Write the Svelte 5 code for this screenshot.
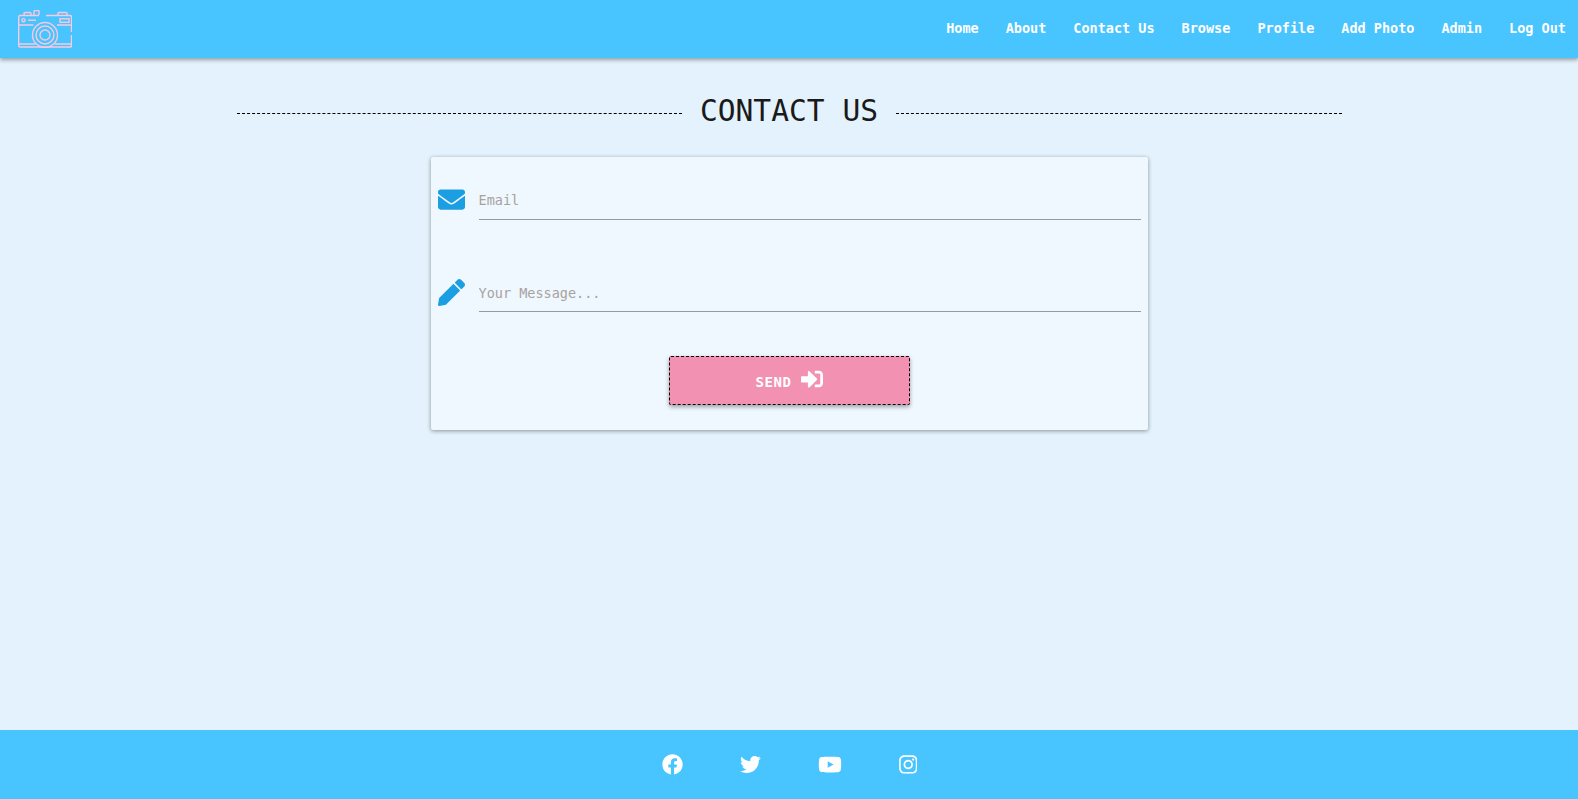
<script>
  const links = ['Home', 'About', 'Contact Us', 'Browse', 'Profile', 'Add Photo', 'Admin', 'Log Out'];
</script>

<div class="page">
  <nav>
    <a class="logo" href="#top" aria-label="Home">
      <svg viewBox="0 0 54 38" width="54" height="38" fill="none" stroke="#fbc8de" stroke-width="1.4">
        <path d="M21 5.500H2.200A1.500 1.500 0 0 0 .7 7v28.500A1.500 1.500 0 0 0 2.200 37h49.800a1.500 1.500 0 0 0 1.500-1.500V25M53.500 22V7A1.500 1.500 0 0 0 52 5.500H28" />
        <path d="M1 15h14.500M39 15h14.500M1 34h16.500M36.500 34H53.500" />
        <path d="M6 5V3.500a1 1 0 0 1 1-1h5a1 1 0 0 1 1 1V5M16 5V1.500a1 1 0 0 1 1-1h3a1 1 0 0 1 1 1V5M40 5V3.500a1 1 0 0 1 1-1h7a1 1 0 0 1 1 1V5" />
        <circle cx="27" cy="25" r="12.500" />
        <circle cx="27" cy="25" r="9" />
        <circle cx="27" cy="25" r="5" />
        <circle cx="5.500" cy="10.200" r="1.600" />
        <path d="M10 10.200h8" />
        <rect x="42" y="8.800" width="9" height="3.500" />
      </svg>
    </a>
    <ul>
      {#each links as link}
        <li><a href="#top">{link}</a></li>
      {/each}
    </ul>
  </nav>

  <main>
    <div class="heading">
      <span class="rule"></span>
      <h1>CONTACT US</h1>
      <span class="rule"></span>
    </div>

    <form class="card">
      <div class="row">
        <svg class="icon envelope" viewBox="0 0 512 512" width="27" height="27"><path d="M502.3 190.8c3.9-3.1 9.7-.2 9.7 4.7V400c0 26.500-21.500 48-48 48H48c-26.500 0-48-21.500-48-48V195.600c0-5 5.700-7.800 9.700-4.700 22.400 17.400 52.100 39.500 154.100 113.600 21.100 15.400 56.700 47.800 92.200 47.600 35.700.3 72-32.800 92.300-47.600 102-74.100 131.600-96.300 154-113.700zM256 320c23.200.4 56.600-29.200 73.400-41.400 132.700-96.300 142.800-104.700 173.400-128.700 5.800-4.500 9.200-11.500 9.200-18.900v-19c0-26.500-21.500-48-48-48H48C21.500 64 0 85.500 0 112v19c0 7.400 3.400 14.300 9.200 18.900 30.600 23.900 40.700 32.400 173.400 128.700 16.800 12.200 50.200 41.800 73.400 41.400z"/></svg>
        <input type="email" placeholder="Email" />
      </div>
      <div class="row message">
        <svg class="icon" viewBox="0 0 512 512" width="27" height="27"><path d="M497.900 142.100l-46.100 46.100c-4.700 4.700-12.300 4.700-17 0l-111-111c-4.700-4.700-4.700-12.300 0-17l46.100-46.100c18.700-18.700 49.100-18.700 67.900 0l60.100 60.100c18.800 18.700 18.800 49.100 0 67.900zM284.200 99.800L21.600 362.400.4 483.900c-2.900 16.400 11.400 30.600 27.800 27.800l121.500-21.300 262.600-262.600c4.700-4.700 4.700-12.300 0-17l-111-111c-4.800-4.700-12.400-4.700-17.100 0z"/></svg>
        <input type="text" placeholder="Your Message..." />
      </div>
      <button type="button">
        SEND
        <svg viewBox="0 0 512 512" width="22" height="22"><path d="M416 448h-84c-6.600 0-12-5.400-12-12v-40c0-6.600 5.400-12 12-12h84c17.700 0 32-14.300 32-32V160c0-17.700-14.300-32-32-32h-84c-6.600 0-12-5.400-12-12V76c0-6.600 5.400-12 12-12h84c53 0 96 43 96 96v192c0 53-43 96-96 96zm-47-201L201 79c-15-15-41-4.500-41 17v96H24c-13.300 0-24 10.700-24 24v96c0 13.300 10.700 24 24 24h136v96c0 21.500 26 32 41 17l168-168c9.300-9.400 9.300-24.600 0-34z"/></svg>
      </button>
    </form>
  </main>

  <footer>
    <svg viewBox="0 0 512 512" width="21" height="21"><path d="M504 256C504 119 393 8 256 8S8 119 8 256c0 123.780 90.690 226.380 209.250 245V327.690h-63V256h63v-54.640c0-62.150 37-96.480 93.670-96.480 27.140 0 55.520 4.840 55.520 4.840v61h-31.280c-30.800 0-40.410 19.120-40.410 38.730V256h68.780l-11 71.690h-57.780V501C413.310 482.380 504 379.780 504 256z"/></svg>
    <svg viewBox="0 0 512 512" width="21" height="21"><path d="M459.370 151.716c.325 4.548.325 9.097.325 13.645 0 138.720-105.583 298.558-298.558 298.558-59.452 0-114.680-17.219-161.137-47.106 8.447.974 16.568 1.299 25.340 1.299 49.055 0 94.213-16.568 130.274-44.832-46.132-.975-84.792-31.188-98.112-72.772 6.498.974 12.995 1.624 19.818 1.624 9.421 0 18.843-1.300 27.614-3.573-48.081-9.747-84.143-51.980-84.143-102.985v-1.299c13.969 7.797 30.214 12.670 47.431 13.319-28.264-18.843-46.781-51.005-46.781-87.391 0-19.492 5.197-37.360 14.294-52.954 51.655 63.675 129.300 105.258 216.365 109.807-1.624-7.797-2.599-15.918-2.599-24.040 0-57.828 46.782-104.934 104.934-104.934 30.213 0 57.502 12.670 76.670 33.137 23.715-4.548 46.456-13.320 66.599-25.340-7.798 24.366-24.366 44.833-46.132 57.827 21.117-2.273 41.584-8.122 60.426-16.243-14.292 20.791-32.161 39.308-52.628 54.253z"/></svg>
    <svg viewBox="0 0 576 512" width="24" height="21"><path d="M549.655 124.083c-6.281-23.650-24.787-42.276-48.284-48.597C458.781 64 288 64 288 64S117.220 64 74.629 75.486c-23.497 6.322-42.003 24.947-48.284 48.597-11.412 42.867-11.412 132.305-11.412 132.305s0 89.438 11.412 132.305c6.281 23.650 24.787 41.500 48.284 47.821C117.220 448 288 448 288 448s170.780 0 213.371-11.486c23.497-6.321 42.003-24.171 48.284-47.821 11.412-42.867 11.412-132.305 11.412-132.305s0-89.438-11.412-132.305zm-317.510 213.508V175.185l142.739 81.205-142.739 81.201z"/></svg>
    <svg viewBox="0 0 448 512" width="18.500" height="21"><path d="M224.100 141c-63.600 0-114.900 51.300-114.900 114.900s51.300 114.900 114.900 114.900S339 319.500 339 255.900 287.700 141 224.100 141zm0 189.600c-41.100 0-74.700-33.500-74.700-74.700s33.500-74.700 74.700-74.700 74.700 33.500 74.700 74.700-33.600 74.700-74.700 74.700zm146.400-194.300c0 14.900-12 26.800-26.800 26.800-14.900 0-26.800-12-26.800-26.800s12-26.800 26.800-26.800 26.800 12 26.800 26.800zm76.100 27.200c-1.700-35.900-9.900-67.700-36.200-93.900-26.200-26.200-58-34.400-93.900-36.200-37-2.100-147.900-2.100-184.900 0-35.800 1.700-67.600 9.900-93.900 36.100s-34.400 58-36.200 93.900c-2.100 37-2.100 147.900 0 184.900 1.700 35.900 9.900 67.700 36.200 93.900s58 34.400 93.900 36.200c37 2.100 147.900 2.100 184.900 0 35.900-1.700 67.700-9.900 93.900-36.200 26.200-26.200 34.400-58 36.200-93.900 2.100-37 2.100-147.800 0-184.800zM398.800 388c-7.800 19.600-22.900 34.700-42.600 42.600-29.500 11.700-99.500 9-132.100 9s-102.700 2.600-132.100-9c-19.600-7.800-34.700-22.900-42.600-42.600-11.700-29.500-9-99.500-9-132.100s-2.600-102.700 9-132.100c7.800-19.600 22.900-34.700 42.600-42.600 29.500-11.700 99.500-9 132.100-9s102.700-2.600 132.100 9c19.600 7.800 34.700 22.900 42.600 42.600 11.700 29.500 9 99.500 9 132.100s2.700 102.700-9 132.100z"/></svg>
  </footer>
</div>

<style>
  :global(body) {
    background: #e3f2fd;
  }

  .page {
    display: flex;
    flex-direction: column;
    min-height: 799px;
    font-family: "DejaVu Sans Mono", "Liberation Mono", monospace;
  }

  nav {
    display: flex;
    align-items: center;
    justify-content: space-between;
    height: 58px;
    padding: 0 12px 0 18px;
    box-sizing: border-box;
    background: #48c4ff;
    box-shadow: 0 2px 4px rgba(0, 0, 0, 0.35);
  }

  .logo {
    display: flex;
  }

  ul {
    display: flex;
    gap: 27px;
    margin: -4px 0 0;
    padding: 0;
    list-style: none;
  }

  li a {
    color: #fff;
    font-size: 13.500px;
    font-weight: 700;
    text-decoration: none;
  }

  main {
    flex: 1;
    display: flex;
    flex-direction: column;
    align-items: center;
  }

  .heading {
    display: flex;
    align-items: center;
    gap: 18.400px;
    width: 1105px;
    margin-top: 35px;
    height: 34px;
  }

  .rule {
    flex: 1;
    border-top: 1px dashed #000;
    margin-top: 6px;
  }

  h1 {
    margin: 2px 0 0;
    color: #1a1a1a;
    font-size: 29.600px;
    font-weight: 400;
    line-height: 34px;
  }

  .card {
    display: flex;
    flex-direction: column;
    width: 717px;
    height: 273px;
    margin-top: 30px;
    padding: 0 7px;
    box-sizing: border-box;
    background: #eff7ff;
    border-radius: 2px;
    box-shadow: 0 1px 4px rgba(0, 0, 0, 0.4);
  }

  .row {
    display: flex;
    align-items: center;
    gap: 14px;
    margin-top: 23px;
    height: 40px;
  }

  .row.message {
    margin-top: 52px;
  }

  .icon {
    flex: none;
    fill: #1b9fe2;
  }

  .envelope {
    margin-top: -2px;
  }

  input {
    flex: 1;
    height: 40px;
    padding: 0;
    box-sizing: border-box;
    border: 0;
    border-bottom: 1px solid #9a9a9a;
    outline: none;
    background: transparent;
    font: 13.500px "DejaVu Sans Mono", "Liberation Mono", monospace;
  }

  .message input {
    padding-top: 3px;
  }

  input::placeholder {
    color: #a8a29e;
  }

  button {
    display: flex;
    align-items: center;
    justify-content: center;
    gap: 9px;
    align-self: center;
    width: 241px;
    height: 49px;
    margin-top: 44px;
    padding-top: 3px;
    border: 1px dashed #000;
    border-radius: 2px;
    background: #f391b2;
    box-shadow: 0 2px 4px rgba(0, 0, 0, 0.35);
    color: #fff;
    font: 700 14px "DejaVu Sans Mono", "Liberation Mono", monospace;
    letter-spacing: 0.600px;
  }

  button svg {
    fill: #fff;
    margin-top: -6px;
  }

  footer {
    display: flex;
    align-items: center;
    justify-content: center;
    gap: 57px;
    height: 69px;
    padding-left: 1px;
    background: #48c4ff;
  }

  footer svg {
    fill: #fff;
  }
</style>
